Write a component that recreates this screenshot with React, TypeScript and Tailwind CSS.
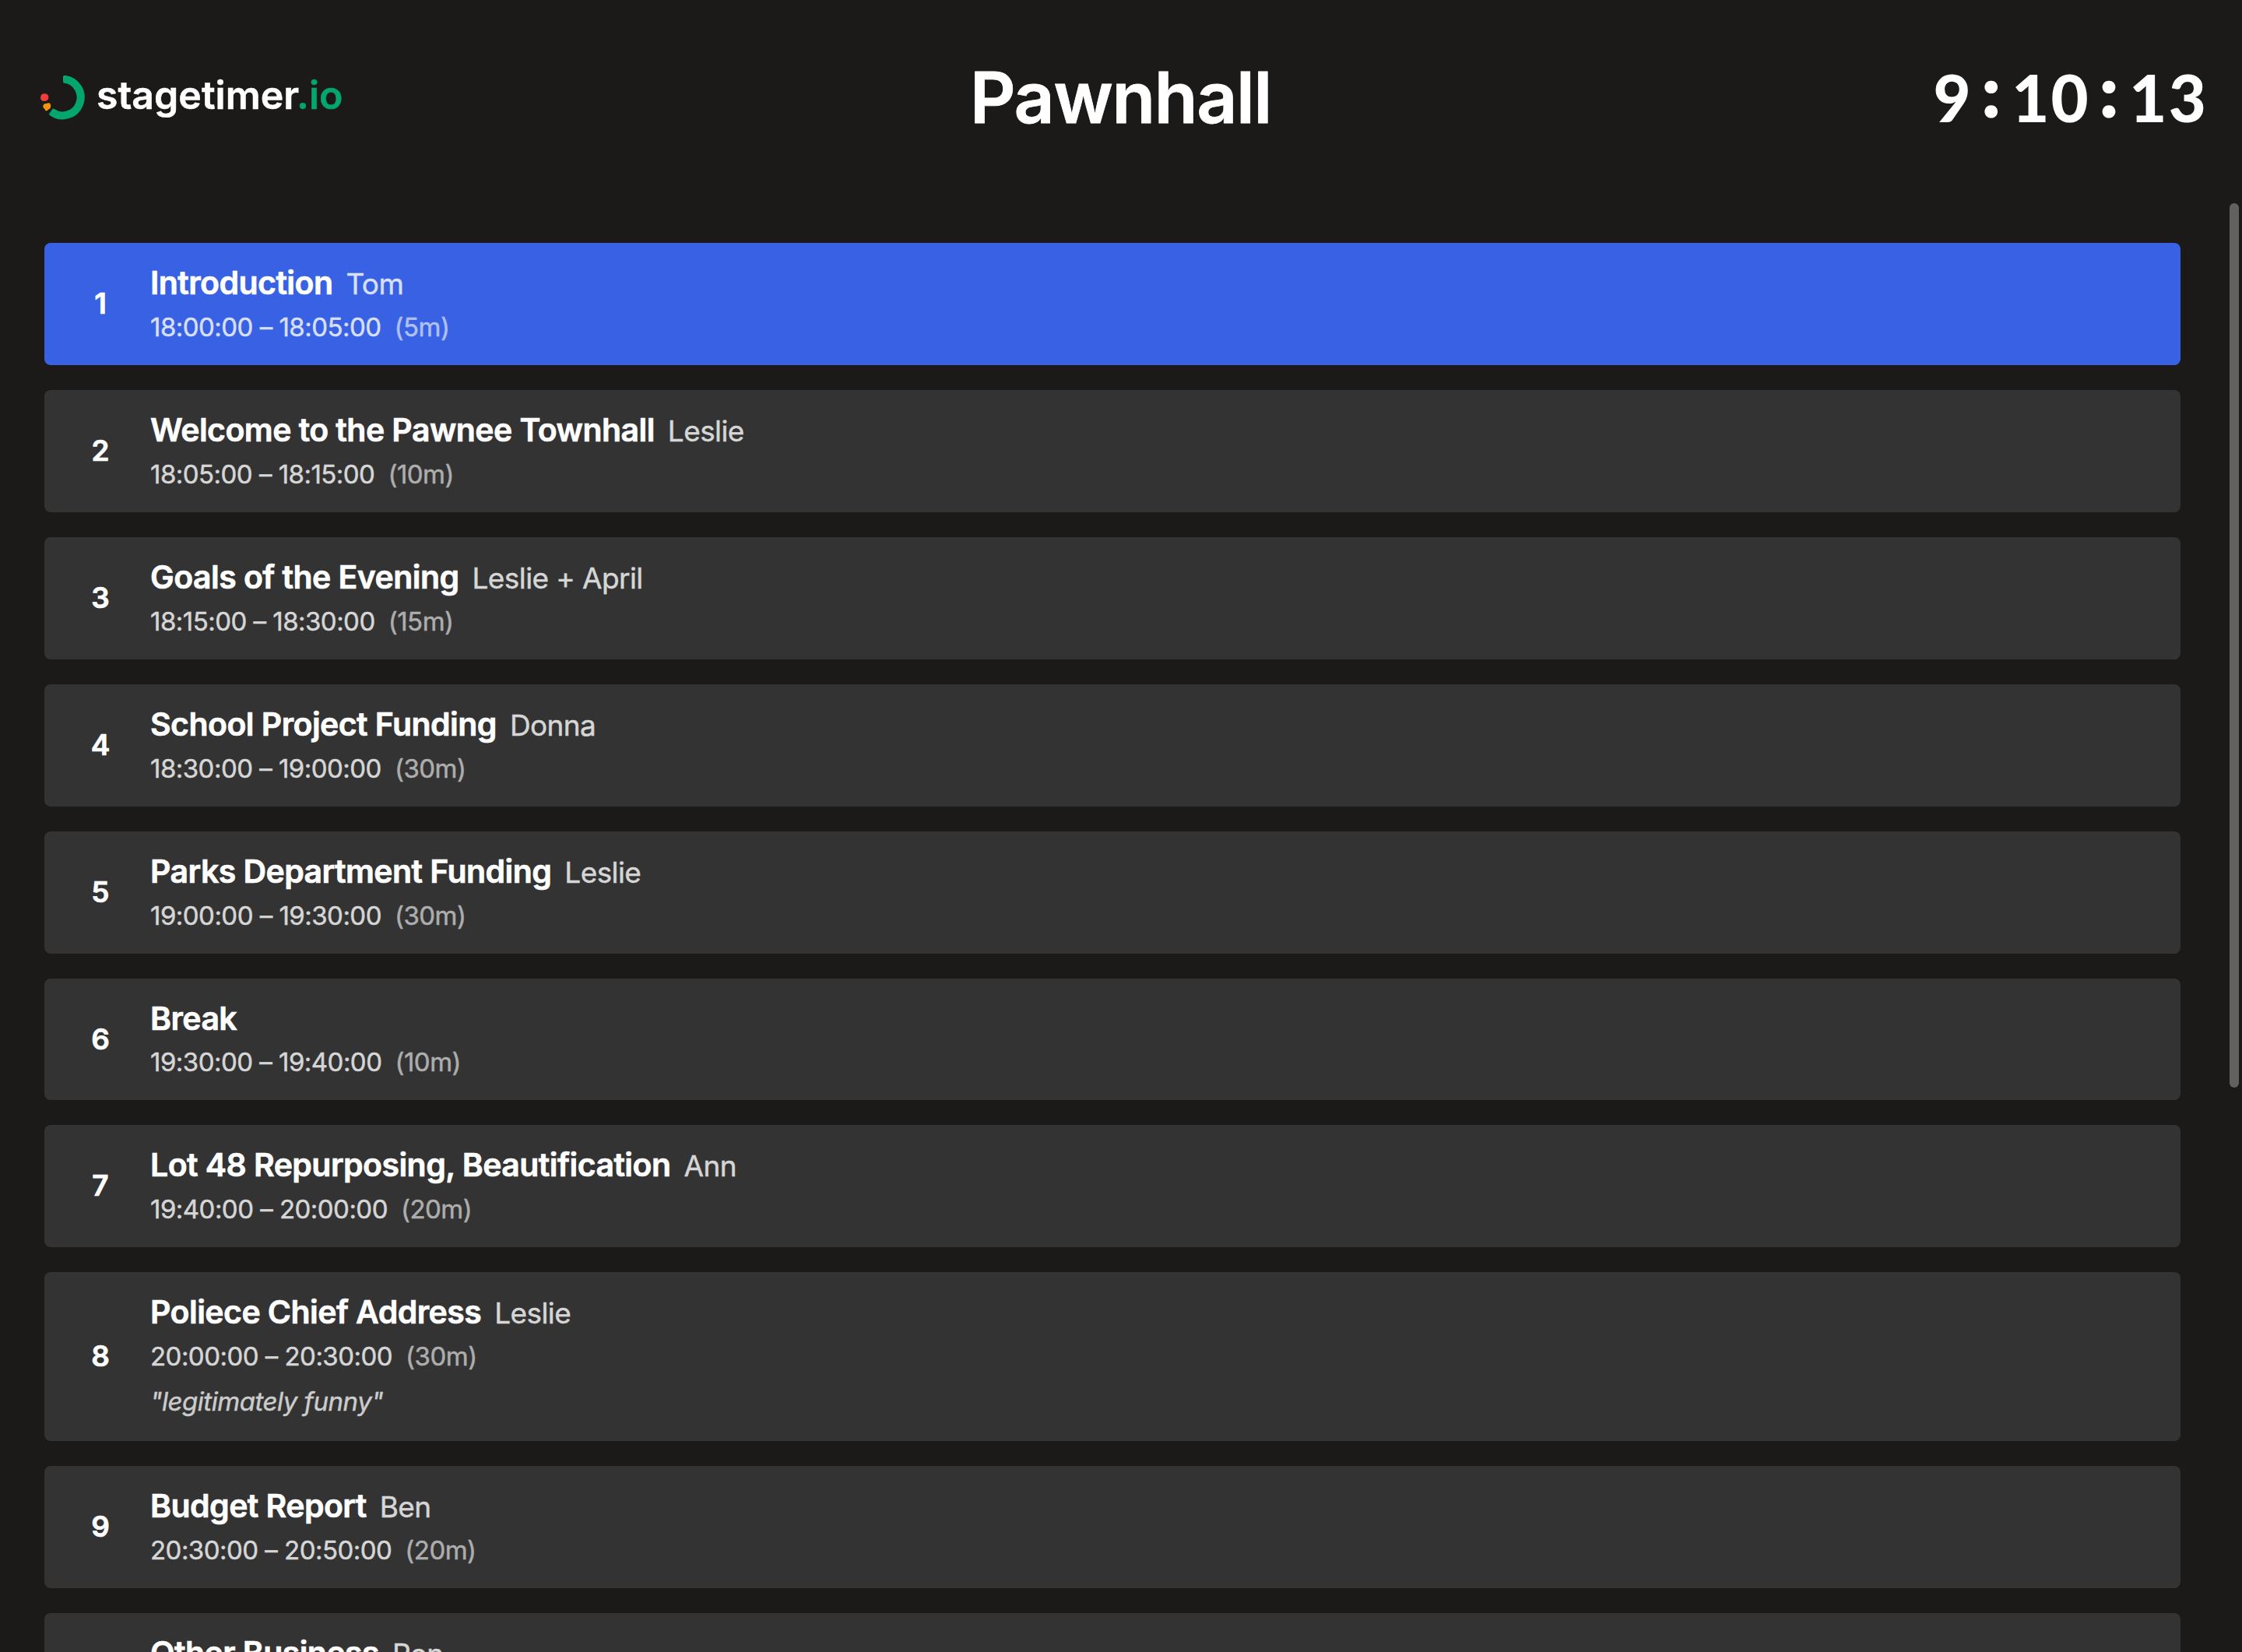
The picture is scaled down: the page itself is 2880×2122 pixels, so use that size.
interface Timer {
  title: string;
  speaker?: string;
  start: string;
  end: string;
  duration: string;
  note?: string;
}

const timers: Timer[] = [
  { title: 'Introduction', speaker: 'Tom', start: '18:00:00', end: '18:05:00', duration: '5m' },
  { title: 'Welcome to the Pawnee Townhall', speaker: 'Leslie', start: '18:05:00', end: '18:15:00', duration: '10m' },
  { title: 'Goals of the Evening', speaker: 'Leslie + April', start: '18:15:00', end: '18:30:00', duration: '15m' },
  { title: 'School Project Funding', speaker: 'Donna', start: '18:30:00', end: '19:00:00', duration: '30m' },
  { title: 'Parks Department Funding', speaker: 'Leslie', start: '19:00:00', end: '19:30:00', duration: '30m' },
  { title: 'Break', start: '19:30:00', end: '19:40:00', duration: '10m' },
  { title: 'Lot 48 Repurposing, Beautification', speaker: 'Ann', start: '19:40:00', end: '20:00:00', duration: '20m' },
  { title: 'Poliece Chief Address', speaker: 'Leslie', start: '20:00:00', end: '20:30:00', duration: '30m', note: '"legitimately funny"' },
  { title: 'Budget Report', speaker: 'Ben', start: '20:30:00', end: '20:50:00', duration: '20m' },
  { title: 'Other Business', speaker: 'Ron', start: '20:50:00', end: '21:00:00', duration: '10m' },
];

function Logo() {
  return (
    <div className="flex items-center">
      <svg className="mt-0.5 h-[58px] w-[58px]" viewBox="0 0 174 174" fill="none">
        <path
          d="M93 5.4 A79 79 0 1 1 39.7 148.7 L50 134 A61 61 0 1 0 93 23.5Z"
          fill="#03a66c"
          stroke="#03a66c"
          strokeWidth="12"
          strokeLinejoin="round"
        />
        <path
          d="M2 78 Q4 70 14 70 Q25 69 29 76 Q33 84 29 92 Q25 99 14 99 Q4 99 1 91 Q-1 84 2 78Z"
          fill="#f03e3e"
        />
        <path
          d="M11 113 Q15 107 23 108 Q32 103 37 108 Q42 114 39 122 Q38 128 32 130 Q25 139 19 135 Q18 129 12 125 Q8 119 11 113Z"
          fill="#f6930f"
        />
      </svg>
      <span className="ml-3.5 pb-1.5 text-[50px] leading-none font-semibold text-white [-webkit-text-stroke:0.5px]">
        stagetimer<span className="text-[#03a66c]">.io</span>
      </span>
    </div>
  );
}

function Clock({ time }: { time: string }) {
  return (
    <div className="flex items-baseline font-['Lato',sans-serif] text-[83px] leading-none font-black text-white">
      {time.split('').map((char, i) => (
        <span
          key={i}
          className={
            char === ':'
              ? 'flex w-[50.4px] -translate-y-[7px] justify-center text-[90px] leading-[77px] [-webkit-text-stroke:2px]'
              : 'flex w-[50.4px] justify-center'
          }
        >
          {char}
        </span>
      ))}
    </div>
  );
}

function rowHeight(timer: Timer) {
  if (timer.note) return 'h-[217px]';
  return timer.speaker ? 'h-[157px]' : 'h-[156px]';
}

function TimerRow({ timer, index, active }: { timer: Timer; index: number; active: boolean }) {
  return (
    <li
      className={`flex shrink-0 items-center rounded-lg pl-2 text-white ${rowHeight(timer)} ${
        active ? 'bg-[#3862e3]' : 'bg-[#333333]'
      }`}
    >
      <span className="w-32 pb-0.5 text-center text-[37px] leading-none font-semibold [-webkit-text-stroke:0.7px]">
        {index}
      </span>
      <div className="flex flex-col self-start pt-[25px]">
        <div className={`flex items-baseline gap-[17px] leading-[53px] ${timer.speaker ? 'h-[55px]' : 'h-[54px]'}`}>
          <span className="text-[41px] font-semibold tracking-[-0.0135em] [-webkit-text-stroke:0.7px]">
            {timer.title}
          </span>
          {timer.speaker && (
            <span className="text-[37px] tracking-[-0.016em] opacity-80 [-webkit-text-stroke:0.4px]">{timer.speaker}</span>
          )}
        </div>
        <div className="flex items-baseline gap-[17px] text-[33px] leading-[56px] tracking-[-0.016em] [-webkit-text-stroke:0.4px]">
          <span className="opacity-80">
            {timer.start} – {timer.end}
          </span>
          <span className="opacity-60">({timer.duration})</span>
        </div>
        {timer.note && (
          <p className="text-[33px] leading-[60px] tracking-[-0.014em] italic opacity-75 [-webkit-text-stroke:0.4px]">
            {timer.note}
          </p>
        )}
      </div>
    </li>
  );
}

export default function App() {
  return (
    <div className="flex h-screen w-full flex-col overflow-hidden bg-[#1b1a18] font-['Inter',sans-serif]">
      <header className="grid h-[253px] shrink-0 grid-cols-3 items-center pr-[45px] pb-[3px] pl-[52px]">
        <Logo />
        <h1 className="mr-2 text-center text-[91px] leading-none font-semibold tracking-[-0.015em] text-white [-webkit-text-stroke:0.8px]">
          Pawnhall
        </h1>
        <div className="flex justify-end">
          <Clock time="9:10:13" />
        </div>
      </header>

      <main className="flex min-h-0 flex-1 pr-1">
        <ul className="flex flex-1 flex-col gap-8 overflow-hidden pt-[59px] pr-[63px] pl-[57px]">
          {timers.map((timer, i) => (
            <TimerRow key={timer.title} timer={timer} index={i + 1} active={i === 0} />
          ))}
        </ul>
        <div className="mt-2 h-[1136px] w-3 rounded-full bg-[#62615f]" />
      </main>
    </div>
  );
}
